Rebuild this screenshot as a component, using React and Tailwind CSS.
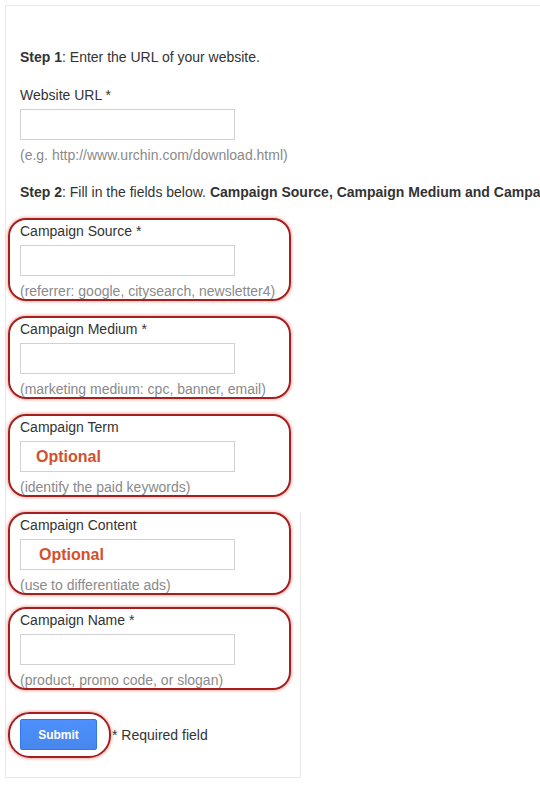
import React from 'react';

const boxCls =
    'ml-[2px] w-[283px] rounded-[18px] border-2 border-[#a3201e] px-[10px] pt-[3px] shadow-[0_0_3px_1px_rgba(226,80,70,0.45)]';

function Field({ label, hint, optional, optionalPad, className = '' }) {
    return (
        <div className={`${boxCls} ${className}`}>
            <div>{label}</div>
            <div
                className={`mt-[6px] flex h-[31px] w-[215px] items-center border border-[#d2d2d2] bg-white ${optionalPad}`}
            >
                {optional && (
                    <span className="text-[16px] font-bold text-[#d4502c]">Optional</span>
                )}
            </div>
            <div className="mt-[7px] text-[#8a8a8a]">{hint}</div>
        </div>
    );
}

export default function App() {
    return (
        <div className="min-h-[786px] w-[540px] overflow-hidden bg-white pl-[5px] pt-[5px] font-['Liberation_Sans',Arial,sans-serif] text-[14px] leading-4 text-[#333]">
            <div className="border-l border-t border-[#e8e8e8]">
                {/* Step 1 */}
                <div className="ml-[14px] pt-[43px] whitespace-nowrap">
                    <span className="font-bold">Step 1</span>: Enter the URL of your website.
                </div>
                <div className="ml-[14px] mt-[22px]">Website URL *</div>
                <div className="ml-[14px] mt-[6px] h-[31px] w-[215px] border border-[#d2d2d2]"></div>
                <div className="ml-[14px] mt-[7px] text-[#8a8a8a]">(e.g. http://www.urchin.com/download.html)</div>

                {/* Step 2 */}
                <div className="ml-[14px] mt-[21px] whitespace-nowrap">
                    <span className="font-bold">Step 2</span>: Fill in the fields below.{' '}
                    <span className="font-bold">Campaign Source, Campaign Medium and Campaign Name</span> are required values.
                </div>

                <Field
                    className="mt-[18px]"
                    label="Campaign Source *"
                    hint="(referrer: google, citysearch, newsletter4)"
                />
                <Field
                    className="mt-[15px]"
                    label="Campaign Medium *"
                    hint="(marketing medium: cpc, banner, email)"
                />
                <Field
                    className="mt-[15px]"
                    label="Campaign Term"
                    hint="(identify the paid keywords)"
                    optional
                    optionalPad="pl-[15px]"
                />

                <div className="mt-[15px] w-[295px] border-b border-r border-[#e8e8e8] pb-[19px]">
                    <Field
                        label="Campaign Content"
                        hint="(use to differentiate ads)"
                        optional
                        optionalPad="pl-[18px]"
                    />
                    <Field
                        className="mt-[12px]"
                        label="Campaign Name *"
                        hint="(product, promo code, or slogan)"
                    />

                    {/* Submit row */}
                    <div className="mt-[22px] ml-[2px] flex items-center">
                        <div className="rounded-[22px] border-2 border-[#a3201e] pb-[6px] pl-[10px] pr-[12px] pt-[5px] shadow-[0_0_3px_1px_rgba(226,80,70,0.45)]">
                            <button className="h-[31px] w-[77px] rounded-[2px] border border-[#3079ed] bg-gradient-to-b from-[#4d90fe] to-[#4787ed] text-[12px] font-bold text-white">
                                Submit
                            </button>
                        </div>
                        <span className="ml-px">* Required field</span>
                    </div>
                </div>
            </div>
        </div>
    );
}
